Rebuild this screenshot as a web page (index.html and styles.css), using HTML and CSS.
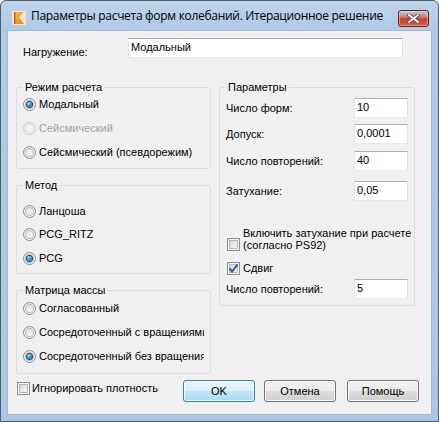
FILE: index.html
```html
<!DOCTYPE html>
<html lang="ru">
<head>
<meta charset="utf-8">
<title>Параметры расчета форм колебаний</title>
<link rel="stylesheet" href="styles.css">
</head>
<body>
<div class="window">
  <div class="titlebar">
    <svg class="app-icon" width="16" height="16" viewBox="0 0 16 16">
      <defs>
        <linearGradient id="flag" x1="0" y1="0" x2="1" y2="1">
          <stop offset="0" stop-color="#f9c34a"/>
          <stop offset="1" stop-color="#e47a14"/>
        </linearGradient>
      </defs>
      <rect x="1" y="1" width="14" height="14" rx="1" fill="#f6e7cc"/>
      <polygon points="3,2 12,2 8,7.5 13,14 3,14" fill="url(#flag)"/>
      <rect x="3" y="2" width="1.5" height="12" fill="#c86410"/>
    </svg>
    <span class="title">Параметры расчета форм колебаний. Итерационное решение</span>
    <div class="close-btn">
      <svg width="13" height="9" viewBox="0 0 13 9">
        <path d="M2 1 L11 8 M11 1 L2 8" stroke="#5b4f4c" stroke-width="3.6" stroke-linecap="square" fill="none"/>
        <path d="M2 1 L11 8 M11 1 L2 8" stroke="#ffffff" stroke-width="1.8" stroke-linecap="square" fill="none"/>
      </svg>
    </div>
  </div>
  <div class="client">
    <div class="load-row">
      <span class="load-label">Нагружение:</span>
      <div class="field field-load">Модальный</div>
    </div>
    <div class="columns">
      <div class="col-left">
        <fieldset class="group g-mode">
          <legend>Режим расчета</legend>
          <div class="opts">
            <div class="opt"><span class="radio checked"></span><span class="opt-text">Модальный</span></div>
            <div class="opt disabled"><span class="radio"></span><span class="opt-text">Сейсмический</span></div>
            <div class="opt"><span class="radio"></span><span class="opt-text">Сейсмический (псевдорежим)</span></div>
          </div>
        </fieldset>
        <fieldset class="group g-method">
          <legend>Метод</legend>
          <div class="opts opts-method">
            <div class="opt"><span class="radio"></span><span class="opt-text">Ланцоша</span></div>
            <div class="opt"><span class="radio"></span><span class="opt-text">PCG_RITZ</span></div>
            <div class="opt"><span class="radio checked"></span><span class="opt-text">PCG</span></div>
          </div>
        </fieldset>
        <fieldset class="group g-mass">
          <legend>Матрица массы</legend>
          <div class="opts">
            <div class="opt"><span class="radio"></span><span class="opt-text">Согласованный</span></div>
            <div class="opt"><span class="radio"></span><span class="opt-text">Сосредоточенный с вращениями</span></div>
            <div class="opt"><span class="radio checked"></span><span class="opt-text">Сосредоточенный без вращения</span></div>
          </div>
        </fieldset>
      </div>
      <fieldset class="group g-params">
        <legend>Параметры</legend>
        <div class="prow pr1"><span>Число форм:</span><div class="field field-num">10</div></div>
        <div class="prow pr2"><span>Допуск:</span><div class="field field-num">0,0001</div></div>
        <div class="prow pr3"><span>Число повторений:</span><div class="field field-num">40</div></div>
        <div class="prow pr4"><span>Затухание:</span><div class="field field-num">0,05</div></div>
        <div class="chk-block">
          <span class="check"></span>
          <span class="chk-text">Включить затухание при расчете<br>(согласно PS92)</span>
        </div>
        <div class="chk-row">
          <span class="check checked">
            <svg width="11" height="11" viewBox="0 0 11 11"><path d="M1.5 5.5 L4.2 8.5 L9.5 1.5" stroke="#3c4f8c" stroke-width="2" fill="none"/></svg>
          </span>
          <span class="chk-text">Сдвиг</span>
        </div>
        <div class="prow pr5"><span>Число повторений:</span><div class="field field-num">5</div></div>
      </fieldset>
    </div>
    <div class="bottom-row">
      <div class="chk-row ignore"><span class="check"></span><span class="chk-text">Игнорировать плотность</span></div>
      <div class="buttons">
        <div class="btn btn-default">OK</div>
        <div class="btn btn-cancel">Отмена</div>
        <div class="btn btn-help">Помощь</div>
      </div>
    </div>
  </div>
</div>
</body>
</html>
```
FILE: styles.css
```css
* { box-sizing: border-box; }

body {
  margin: 0;
  background: #ffffff;
  font-family: "Liberation Sans", Arial, sans-serif;
  font-size: 11px;
  line-height: 13px;
  color: #000;
}

.window {
  width: 439px;
  height: 422px;
  display: flex;
  flex-direction: column;
  border: 1px solid #4c5d72;
  border-radius: 6px 6px 0 0;
  background: linear-gradient(#bdd4ec 0px, #afc9e7 30px, #abc6e5 100%);
  padding: 0 7px 7px;
}

.titlebar {
  height: 30px;
  flex: none;
  display: flex;
  align-items: flex-start;
}

.app-icon {
  margin: 9px 0 0 3px;
  flex: none;
}

.title {
  margin: 7px 0 0 4px;
  font-family: "Open Sans", "Noto Sans", sans-serif;
  font-size: 12px;
  letter-spacing: -0.3px;
  line-height: 16px;
  color: #000;
  white-space: nowrap;
  flex: 1;
}

.close-btn {
  margin: 9px 2px 0 0;
  width: 31px;
  height: 17px;
  flex: none;
  border: 1px solid #6a2218;
  border-radius: 3px;
  background: linear-gradient(#e6a597 0%, #d7796300 0%, #d77963 42%, #c4442c 52%, #cf5f43 100%);
  box-shadow: inset 0 0 0 1px rgba(255, 220, 210, 0.45);
  display: flex;
  align-items: center;
  justify-content: center;
}

.client {
  flex: 1;
  background: #f0f0f0;
  outline: 1px solid #9fb9d8;
  display: flex;
  flex-direction: column;
}

.load-row {
  display: flex;
  align-items: flex-start;
  padding: 7px 0 0 15px;
}

.load-label {
  width: 105px;
  margin-top: 8px;
}

.field {
  height: 20px;
  background: #fff;
  border: 1px solid #e2e3ea;
  border-top-color: #abadb3;
  border-bottom-color: #e3e9ef;
  padding: 2px 2px 0;
  line-height: 13px;
  white-space: nowrap;
  overflow: hidden;
}

.field-load { width: 275px; }
.field-num { width: 54px; flex: none; }

.columns {
  display: flex;
  gap: 8px;
  margin-top: 22px;
  padding-left: 8px;
}

.col-left {
  width: 195px;
  display: flex;
  flex-direction: column;
  gap: 10px;
}

.group {
  margin: 0;
  min-width: 0;
  border: 1px solid #d5dfe5;
  border-radius: 3px;
  padding: 0 6px;
}

.group legend {
  padding: 0 2px;
  line-height: 13px;
}

.g-mode { height: 88px; }
.g-method { height: 95px; padding-top: 9px; }
.g-mass { height: 90px; padding-top: 1px; }
.g-params { width: 196px; height: 225px; }

.opts {
  display: flex;
  flex-direction: column;
  gap: 4px;
}

.opts-method { gap: 3.5px; }

.opt {
  height: 20px;
  display: flex;
  align-items: center;
  white-space: nowrap;
  overflow: hidden;
}

.opt.disabled { color: #a3a3a3; }

.radio {
  width: 13px;
  height: 13px;
  flex: none;
  margin-right: 3px;
  border-radius: 50%;
  border: 1px solid #8e8f8f;
  background: radial-gradient(circle at 60% 65%, #f7f7f7 0%, #e6e7e9 45%, #cfd2d6 100%);
  box-shadow: inset 0 0 0 1px #f8f8f8, inset 0 0 0 2px #b5b9bf;
  display: flex;
  align-items: center;
  justify-content: center;
}

.opt.disabled .radio {
  border-color: #c9c9c9;
  background: #f4f4f4;
  box-shadow: inset 0 0 0 1px #f6f6f6, inset 0 0 0 2px #dedede;
}

.radio.checked::after {
  content: "";
  width: 5px;
  height: 5px;
  border-radius: 50%;
  background: radial-gradient(circle at 35% 30%, #9fe0ff 0%, #3a94d4 45%, #145487 100%);
  box-shadow: 0 0 0 1px #1d4f78;
}

.prow {
  height: 20px;
  display: flex;
  align-items: center;
  justify-content: space-between;
}

.pr1 { margin-top: 4px; }
.pr2 { margin-top: 6px; }
.pr3 { margin-top: 7px; }
.pr4 { margin-top: 10px; }
.pr5 { margin-top: 3px; }

.check {
  width: 13px;
  height: 13px;
  flex: none;
  border: 1px solid #8e8f8f;
  padding: 1px;
  background: linear-gradient(135deg, #cdd1d6 0%, #e9eaec 55%, #f8f8f8 100%) content-box, #f6f6f6;
  box-shadow: inset 0 0 0 1px #f6f6f6, inset 0 0 0 2px #b3b7bd;
  display: flex;
  align-items: center;
  justify-content: center;
}

.check svg { flex: none; }

.chk-block {
  margin-top: 26px;
  display: flex;
  align-items: flex-end;
  padding-left: 1px;
}

.chk-text {
  line-height: 12px;
  margin-left: 3px;
  white-space: nowrap;
}

.chk-row {
  height: 16px;
  margin-top: 9px;
  display: flex;
  align-items: center;
  padding-left: 1px;
}

.chk-row .chk-text { line-height: 13px; }

.bottom-row {
  display: flex;
  align-items: flex-start;
  margin-top: 6px;
  padding: 0 12px 0 8px;
}

.chk-row.ignore { margin-top: 0; }
.chk-row.ignore .chk-text { margin-left: 2px; }

.buttons {
  margin-left: auto;
  display: flex;
}

.btn {
  width: 72px;
  height: 22px;
  border: 1px solid #707070;
  border-radius: 3px;
  background: linear-gradient(#f2f2f2 0%, #ebebeb 50%, #dddddd 50%, #cfcfcf 100%);
  box-shadow: inset 0 0 0 1px #fbfbfb;
  display: flex;
  align-items: center;
  justify-content: center;
}

.btn-default {
  border-color: #3c7fb1;
  background: linear-gradient(#eaf6fd 0%, #d9f0fc 50%, #bee6fd 50%, #a7d9f5 100%);
  box-shadow: inset 0 0 0 1px #f4fbff;
}

.btn-cancel { margin-left: 9px; }
.btn-help { margin-left: 11px; }
```
